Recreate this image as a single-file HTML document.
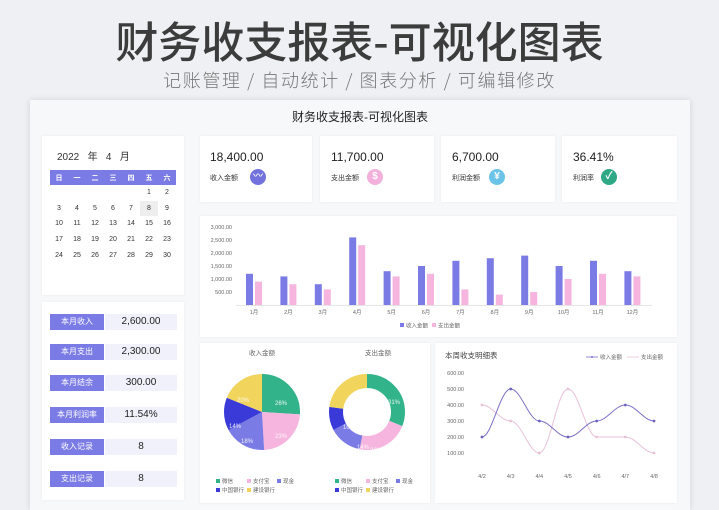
<!DOCTYPE html>
<html><head><meta charset="utf-8"><style>
*{margin:0;padding:0;box-sizing:border-box}
body{width:719px;height:510px;overflow:hidden;background:#eef0f3;font-family:"Liberation Sans","Noto Sans CJK SC",sans-serif;position:relative;color:#333}
.abs{position:absolute}
.h1{left:0;width:719px;top:14px;text-align:center;font-size:43px;font-weight:500;color:#3c3c3c;line-height:52px;font-family:"Noto Sans CJK SC",sans-serif}
.h2{left:0;width:719px;top:67px;text-align:center;font-size:18px;color:#777;line-height:26px;letter-spacing:1.6px;font-weight:300;font-family:"Noto Sans CJK SC",sans-serif}
.panel{left:30px;top:100px;width:660px;height:410px;background:#f7f8fa;box-shadow:0 0 6px rgba(0,0,0,.12)}
.card{background:#fff;box-shadow:0 0 3px rgba(0,0,0,.06)}
.cal td{width:18px;height:15.6px;text-align:center;font-size:7px;color:#333}
.cal th{background:#7b7be6;color:#fff;font-size:7px;height:15px;font-weight:bold}
.lab{background:#7b7be6;color:#fff;font-size:8px;width:54px;height:16px;line-height:16px;text-align:center}
.val{background:#f1f1fb;font-size:10px;width:72px;height:16px;line-height:16px;text-align:center;color:#222}
.kv{font-size:12px;color:#222}
.kl{font-size:7px;color:#333}
.ic{width:16px;height:16px;border-radius:50%;color:#fff;font-size:10px;text-align:center;line-height:16px;font-weight:bold}
svg text{font-family:"Liberation Sans","Noto Sans CJK SC",sans-serif}
</style></head><body>
<div class="abs h1">财务收支报表-可视化图表</div>
<div class="abs h2">记账管理 / 自动统计 / 图表分析 / 可编辑修改</div>
<div class="abs panel"></div>
<div class="abs" style="left:30px;top:108px;width:660px;text-align:center;font-size:12px;color:#222">财务收支报表-可视化图表</div>

<div class="abs card" style="left:42px;top:136px;width:142px;height:159px"></div>
<div class="abs" style="left:57px;top:148px;font-size:10px;color:#333">2022 &nbsp;&nbsp;年 &nbsp;&nbsp;4 &nbsp;&nbsp;月</div>
<table class="abs cal" style="left:50px;top:170px;border-collapse:separate;border-spacing:0.5px 0">
<tr><th>日</th><th>一</th><th>二</th><th>三</th><th>四</th><th>五</th><th>六</th></tr>
<tr><td></td><td></td><td></td><td></td><td></td><td>1</td><td>2</td></tr>
<tr><td>3</td><td>4</td><td>5</td><td>6</td><td>7</td><td style="background:#eee">8</td><td>9</td></tr>
<tr><td>10</td><td>11</td><td>12</td><td>13</td><td>14</td><td>15</td><td>16</td></tr>
<tr><td>17</td><td>18</td><td>19</td><td>20</td><td>21</td><td>22</td><td>23</td></tr>
<tr><td>24</td><td>25</td><td>26</td><td>27</td><td>28</td><td>29</td><td>30</td></tr>
</table>

<div class="abs card" style="left:42px;top:302px;width:142px;height:198px"></div>
<div class="abs lab" style="left:50px;top:314px">本月收入</div><div class="abs val" style="left:105px;top:314px">2,600.00</div>
<div class="abs lab" style="left:50px;top:344px">本月支出</div><div class="abs val" style="left:105px;top:344px">2,300.00</div>
<div class="abs lab" style="left:50px;top:375px">本月结余</div><div class="abs val" style="left:105px;top:375px">300.00</div>
<div class="abs lab" style="left:50px;top:407px">本月利润率</div><div class="abs val" style="left:105px;top:407px">11.54%</div>
<div class="abs lab" style="left:50px;top:439px">收入记录</div><div class="abs val" style="left:105px;top:439px">8</div>
<div class="abs lab" style="left:50px;top:471px">支出记录</div><div class="abs val" style="left:105px;top:471px">8</div>

<div class="abs card" style="left:200px;top:136px;width:112px;height:66px"></div>
<div class="abs card" style="left:320px;top:136px;width:114px;height:66px"></div>
<div class="abs card" style="left:441px;top:136px;width:114px;height:66px"></div>
<div class="abs card" style="left:562px;top:136px;width:115px;height:66px"></div>
<div class="abs kv" style="left:210px;top:150px">18,400.00</div><div class="abs kl" style="left:210px;top:173px">收入金额</div><div class="abs ic" style="left:250px;top:169px;background:#7272dc">〰</div>
<div class="abs kv" style="left:331px;top:150px">11,700.00</div><div class="abs kl" style="left:331px;top:173px">支出金额</div><div class="abs ic" style="left:367px;top:169px;background:#f4b0dc">$</div>
<div class="abs kv" style="left:452px;top:150px">6,700.00</div><div class="abs kl" style="left:452px;top:173px">利润金额</div><div class="abs ic" style="left:489px;top:169px;background:#6cc3e8">¥</div>
<div class="abs kv" style="left:573px;top:150px">36.41%</div><div class="abs kl" style="left:573px;top:173px">利润率</div><div class="abs ic" style="left:601px;top:169px;background:#2fa886">✓</div>

<div class="abs card" style="left:200px;top:216px;width:477px;height:121px"></div>
<div class="abs card" style="left:200px;top:343px;width:230px;height:160px"></div>
<div class="abs card" style="left:435px;top:343px;width:242px;height:160px"></div>

<svg class="abs" style="left:0;top:0" width="719" height="510" font-size="5.5" fill="#666">
<g text-anchor="end">
<text x="232" y="229">3,000.00</text><text x="232" y="242">2,500.00</text><text x="232" y="255">2,000.00</text><text x="232" y="268">1,500.00</text><text x="232" y="281">1,000.00</text><text x="232" y="294">500.00</text></g>
<line x1="236" y1="305.5" x2="652" y2="305.5" stroke="#ddd" stroke-width="0.7"/>
<g fill="#7b7be6">
<rect x="246" y="273.8" width="7" height="31.2"/><rect x="280.4" y="276.4" width="7" height="28.6"/><rect x="314.8" y="284.2" width="7" height="20.8"/><rect x="349.2" y="237.4" width="7" height="67.6"/><rect x="383.6" y="271.2" width="7" height="33.8"/><rect x="418" y="266" width="7" height="39"/><rect x="452.4" y="260.8" width="7" height="44.2"/><rect x="486.8" y="258.2" width="7" height="46.8"/><rect x="521.2" y="255.6" width="7" height="49.4"/><rect x="555.6" y="266" width="7" height="39"/><rect x="590" y="260.8" width="7" height="44.2"/><rect x="624.4" y="271.2" width="7" height="33.8"/></g>
<g fill="#f5b5df">
<rect x="255" y="281.6" width="7" height="23.4"/><rect x="289.4" y="284.2" width="7" height="20.8"/><rect x="323.8" y="289.4" width="7" height="15.6"/><rect x="358.2" y="245.2" width="7" height="59.8"/><rect x="392.6" y="276.4" width="7" height="28.6"/><rect x="427" y="273.8" width="7" height="31.2"/><rect x="461.4" y="289.4" width="7" height="15.6"/><rect x="495.8" y="294.6" width="7" height="10.4"/><rect x="530.2" y="292" width="7" height="13"/><rect x="564.6" y="279" width="7" height="26"/><rect x="599" y="273.8" width="7" height="31.2"/><rect x="633.4" y="276.4" width="7" height="28.6"/></g>
<g text-anchor="middle">
<text x="254" y="314">1月</text><text x="288.4" y="314">2月</text><text x="322.8" y="314">3月</text><text x="357.2" y="314">4月</text><text x="391.6" y="314">5月</text><text x="426" y="314">6月</text><text x="460.4" y="314">7月</text><text x="494.8" y="314">8月</text><text x="529.2" y="314">9月</text><text x="563.6" y="314">10月</text><text x="598" y="314">11月</text><text x="632.4" y="314">12月</text></g>
<rect x="400" y="323" width="4" height="4" fill="#7b7be6"/><text x="406" y="327.5">收入金额</text>
<rect x="432" y="323" width="4" height="4" fill="#f5b5df"/><text x="438" y="327.5">支出金额</text>

<text x="262" y="355" text-anchor="middle" font-size="6.5">收入金额</text>
<text x="378" y="355" text-anchor="middle" font-size="6.5">支出金额</text>
<g transform="rotate(-90 262 412)" fill="none" stroke-width="38">
<circle cx="262" cy="412" r="19" stroke="#33b38a" stroke-dasharray="31.04 200"/>
<circle cx="262" cy="412" r="19" stroke="#f5b5df" stroke-dasharray="27.46 200" stroke-dashoffset="-31.04"/>
<circle cx="262" cy="412" r="19" stroke="#7b7be6" stroke-dasharray="21.49 200" stroke-dashoffset="-58.5"/>
<circle cx="262" cy="412" r="19" stroke="#3a3ad8" stroke-dasharray="16.71 200" stroke-dashoffset="-79.99"/>
<circle cx="262" cy="412" r="19" stroke="#f0d45c" stroke-dasharray="22.68 200" stroke-dashoffset="-96.7"/>
</g>
<g transform="rotate(-90 367 412)" fill="none" stroke-width="14">
<circle cx="367" cy="412" r="31" stroke="#33b38a" stroke-dasharray="60.4 300"/>
<circle cx="367" cy="412" r="31" stroke="#f5b5df" stroke-dasharray="42.9 300" stroke-dashoffset="-60.4"/>
<circle cx="367" cy="412" r="31" stroke="#7b7be6" stroke-dasharray="27.3 300" stroke-dashoffset="-103.3"/>
<circle cx="367" cy="412" r="31" stroke="#3a3ad8" stroke-dasharray="19.5 300" stroke-dashoffset="-130.6"/>
<circle cx="367" cy="412" r="31" stroke="#f0d45c" stroke-dasharray="44.8 300" stroke-dashoffset="-150.1"/>
</g>
<g fill="#fff" font-size="6" text-anchor="middle" opacity="0.9">
<text x="281" y="405">26%</text><text x="281" y="438">23%</text><text x="247" y="443">18%</text><text x="235" y="428">14%</text><text x="243" y="402">20%</text>
<text x="394" y="404">31%</text><text x="376" y="452">22%</text><text x="363" y="449">14%</text><text x="349" y="429">10%</text><text x="354" y="399">23%</text></g>
<g font-size="5.5">
<rect x="216" y="479" width="4" height="4" fill="#33b38a"/><text x="222" y="483">微信</text>
<rect x="247" y="479" width="4" height="4" fill="#f5b5df"/><text x="253" y="483">支付宝</text>
<rect x="277" y="479" width="4" height="4" fill="#7b7be6"/><text x="283" y="483">现金</text>
<rect x="216" y="488" width="4" height="4" fill="#3a3ad8"/><text x="222" y="492">中国银行</text>
<rect x="247" y="488" width="4" height="4" fill="#f0d45c"/><text x="253" y="492">建设银行</text>
<rect x="335" y="479" width="4" height="4" fill="#33b38a"/><text x="341" y="483">微信</text>
<rect x="366" y="479" width="4" height="4" fill="#f5b5df"/><text x="372" y="483">支付宝</text>
<rect x="396" y="479" width="4" height="4" fill="#7b7be6"/><text x="402" y="483">现金</text>
<rect x="335" y="488" width="4" height="4" fill="#3a3ad8"/><text x="341" y="492">中国银行</text>
<rect x="366" y="488" width="4" height="4" fill="#f0d45c"/><text x="372" y="492">建设银行</text></g>

<text x="445" y="358" font-size="7.5" fill="#444">本周收支明细表</text>
<line x1="586" y1="357" x2="598" y2="357" stroke="#7b70c8" stroke-width="0.8"/><circle cx="592" cy="357" r="1" fill="#7b70c8"/><text x="600" y="359">收入金额</text>
<line x1="627" y1="357" x2="639" y2="357" stroke="#e8c0d8" stroke-width="0.8"/><text x="641" y="359">支出金额</text>
<g text-anchor="end" font-size="5.5">
<text x="464" y="375">600.00</text><text x="464" y="391">500.00</text><text x="464" y="407">400.00</text><text x="464" y="423">300.00</text><text x="464" y="439">200.00</text><text x="464" y="455">100.00</text></g>
<g text-anchor="middle" font-size="5.5">
<text x="482" y="478">4/2</text><text x="510.7" y="478">4/3</text><text x="539.3" y="478">4/4</text><text x="568" y="478">4/5</text><text x="596.7" y="478">4/6</text><text x="625.3" y="478">4/7</text><text x="654" y="478">4/8</text></g>
<path d="M482 405 C492 405 500 421 510.7 421 C521 421 529 453 539.3 453 C550 453 557 389 568 389 C579 389 586 437 596.7 437 C607 437 615 437 625.3 437 C636 437 644 453 654 453" fill="none" stroke="#e8c0d8" stroke-width="1"/>
<path d="M482 437 C492 437 500 389 510.7 389 C521 389 529 421 539.3 421 C550 421 557 437 568 437 C579 437 586 421 596.7 421 C607 421 615 405 625.3 405 C636 405 644 421 654 421" fill="none" stroke="#7b70c8" stroke-width="1"/>
<g fill="#e8c0d8"><circle cx="482" cy="405" r="1.4"/><circle cx="510.7" cy="421" r="1.4"/><circle cx="539.3" cy="453" r="1.4"/><circle cx="568" cy="389" r="1.4"/><circle cx="596.7" cy="437" r="1.4"/><circle cx="625.3" cy="437" r="1.4"/><circle cx="654" cy="453" r="1.4"/></g>
<g fill="#6b62c0"><circle cx="482" cy="437" r="1.4"/><circle cx="510.7" cy="389" r="1.4"/><circle cx="539.3" cy="421" r="1.4"/><circle cx="568" cy="437" r="1.4"/><circle cx="596.7" cy="421" r="1.4"/><circle cx="625.3" cy="405" r="1.4"/><circle cx="654" cy="421" r="1.4"/></g>
</svg>
</body></html>
